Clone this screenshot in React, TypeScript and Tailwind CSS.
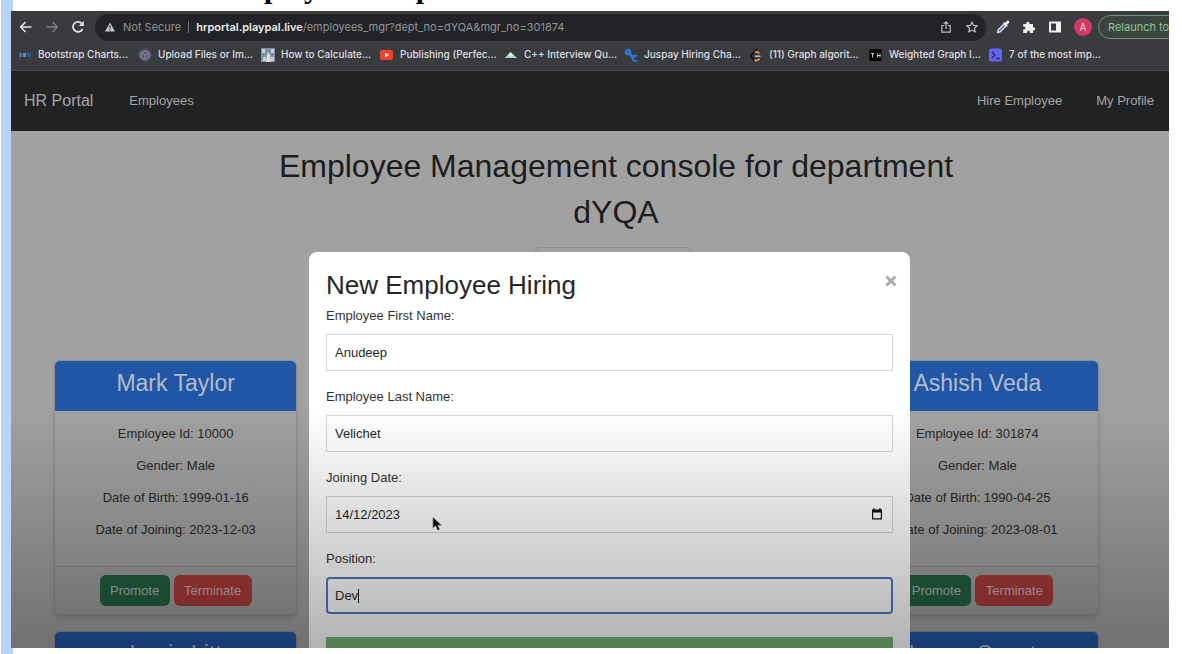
import React from "react";

type Bookmark = { label: string; width: string; icon: React.ReactNode };

const bookmarks: Bookmark[] = [
  {
    label: "Bootstrap Charts...",
    width: "w-[120px]",
    icon: (
      <svg viewBox="0 0 14 14" className="size-3.5">
        <rect x="1" y="5" width="3" height="4" fill="#2f7bbd" />
        <rect x="5" y="5" width="3" height="4" fill="#3f9be0" />
        <rect x="9" y="5" width="4" height="4" fill="#2a5c9c" />
      </svg>
    ),
  },
  {
    label: "Upload Files or Im...",
    width: "w-[123px]",
    icon: (
      <svg viewBox="0 0 14 14" className="size-3.5">
        <circle cx="7" cy="7" r="6.5" fill="#56586c" />
        <path d="M3 5l4-2 4 2v4l-4 2-4-2zM3 5l4 2 4-2M7 7v4" fill="none" stroke="#8a8ca3" strokeWidth="1" />
      </svg>
    ),
  },
  {
    label: "How to Calculate...",
    width: "w-[119px]",
    icon: (
      <svg viewBox="0 0 14 14" className="size-3.5">
        <rect width="14" height="14" fill="#7d93a3" />
        <path d="M1 1h3v4H1zM10 1h3v4h-3zM2 9h3v4H2zM10 9h3v4h-3z" fill="#c3d2dc" />
        <path d="M5 14l1-7 1-3 2 3 1 7z" fill="#e2e4e6" />
      </svg>
    ),
  },
  {
    label: "Publishing (Perfec...",
    width: "w-[124px]",
    icon: (
      <svg viewBox="0 0 14 14" className="size-3.5">
        <rect x="0" y="2" width="13" height="10" rx="2.5" fill="#f0442f" />
        <path d="M5 4.8v4.4L9 7z" fill="#fff" />
      </svg>
    ),
  },
  {
    label: "C++ Interview Qu...",
    width: "w-[120px]",
    icon: (
      <svg viewBox="0 0 14 14" className="size-3.5">
        <path d="M1 10l5.5-6L13 10z" fill="#f1efe0" />
        <path d="M1 10l3-3 3 2 2-2 4 3z" fill="#9fd0c4" />
      </svg>
    ),
  },
  {
    label: "Juspay Hiring Cha...",
    width: "w-[125px]",
    icon: (
      <svg viewBox="0 0 14 14" className="size-3.5">
        <circle cx="4" cy="4" r="3.2" fill="#2f78d8" />
        <path d="M4 4l6 6" stroke="#2f78d8" strokeWidth="3" />
        <path d="M13 8.5a2.6 2.6 0 1 0 0 4" fill="none" stroke="#2f78d8" strokeWidth="2" />
        <circle cx="3.5" cy="3.5" r="1" fill="#1b4f9a" />
      </svg>
    ),
  },
  {
    label: "(11) Graph algorit...",
    width: "w-[120px]",
    icon: (
      <svg viewBox="0 0 14 14" className="size-3.5">
        <path d="M8.500 .8L2.500 6.800q-1 1.200 0 2.400L5.500 12.500" fill="none" stroke="#121212" strokeWidth="1.900" />
        <path d="M6 4.300q2-1.300 4.500 1M5.500 12q2.700 1.600 5-1.200" fill="none" stroke="#f0a032" strokeWidth="1.700" />
        <path d="M6 8.200h5.500" stroke="#c0c0c0" strokeWidth="1.500" />
      </svg>
    ),
  },
  {
    label: "Weighted Graph I...",
    width: "w-[120px]",
    icon: (
      <svg viewBox="0 0 14 14" className="size-3.5">
        <rect x="0.5" y="1" width="12" height="12" fill="#000" />
        <path d="M2 5.500h3M3.500 5.500v4M8.500 5.500v4M11 5.500v4M8 7.500h3.500" stroke="#cfcfcf" strokeWidth="1" />
      </svg>
    ),
  },
  {
    label: "7 of the most imp...",
    width: "w-[120px]",
    icon: (
      <svg viewBox="0 0 14 14" className="size-3.5">
        <rect x="0" y="0.500" width="13" height="13" rx="2" fill="#6263f2" />
        <path d="M3 4l3 3-3 3M7 10.500h4" fill="none" stroke="#24246b" strokeWidth="1.300" />
      </svg>
    ),
  },
];

function BrowserBar() {
  return (
    <header className="shrink-0 border-b border-[#4b4c50] bg-[#3a3b3f] font-[Inter,sans-serif]">
      <div className="flex h-8 items-center overflow-hidden">
        <div className="flex w-[84px] shrink-0 items-center gap-3 pl-2">
          <button type="button" aria-label="Back" className="text-[#e2e3e5]">
            <svg viewBox="0 0 14 14" className="size-3.5" fill="none" stroke="currentColor" strokeWidth="1.6">
              <path d="M12.500 7H2M6.500 2L1.700 7l4.800 5" />
            </svg>
          </button>
          <button type="button" aria-label="Forward" className="text-[#7d7e82]">
            <svg viewBox="0 0 14 14" className="size-3.5" fill="none" stroke="currentColor" strokeWidth="1.5">
              <path d="M1.500 7H12M7.500 2l4.800 5-4.800 5" />
            </svg>
          </button>
          <button type="button" aria-label="Reload" className="text-[#e2e3e5]">
            <svg viewBox="0 0 14 14" className="size-3.5" fill="none" stroke="currentColor" strokeWidth="1.800">
              <path d="M11.500 9A5 5 0 1 1 10.800 3.600" />
              <path d="M12.800 1v5H7.800z" fill="currentColor" stroke="none" />
            </svg>
          </button>
        </div>
        <div className="flex h-[27px] flex-1 items-center rounded-full bg-[#212327] pr-2 pl-2.5 text-[11px] text-[#93959a]">
          <svg viewBox="0 0 12 12" className="mr-2 size-2.5 shrink-0">
            <path d="M6 .5L12 11.500H0z" fill="#c3c4c7" />
            <path d="M6 4.200v3.600M6 8.800v1.400" stroke="#212327" strokeWidth="1.300" />
          </svg>
          <span>Not Secure</span>
          <span className="mx-[7px] h-3 w-px bg-[#6b6d72]" />
          <span className="truncate">
            <span className="font-semibold text-[#eceded]">hrportal.playpal.live</span>
            /employees_mgr?dept_no=dYQA&amp;mgr_no=301874
          </span>
          <span className="flex flex-1 items-center justify-end gap-3.5 text-[#b9babd]">
            <button type="button" aria-label="Share">
              <svg viewBox="0 0 12 12" className="size-3" fill="none" stroke="currentColor" strokeWidth="1.200">
                <path d="M4 4.500H1.800v6.700h8.400V4.500H8M6 8V1M3.800 3L6 .9 8.200 3" />
              </svg>
            </button>
            <button type="button" aria-label="Bookmark this page">
              <svg viewBox="0 0 12 12" className="size-3" fill="none" stroke="currentColor" strokeWidth="1.200" strokeLinejoin="round">
                <path d="M6 .9l1.500 3.500 3.800.3-2.900 2.500.9 3.700L6 8.900l-3.300 2 .9-3.700L.7 4.700l3.800-.3z" />
              </svg>
            </button>
          </span>
        </div>
        <div className="-mr-6 flex shrink-0 items-center gap-3 pl-2.5">
          <svg viewBox="0 0 14 14" className="size-3.5">
            <path d="M1.500 12.500l.6-2.600L8 4l2 2-5.900 5.900z" fill="#6668b8" stroke="#eceded" strokeWidth="1.200" />
            <path d="M7 3l4 4 .9-.9-1-1 2-2a1.300 1.300 0 0 0-2-2l-2 2-1-1z" fill="#f4f4f4" />
          </svg>
          <svg viewBox="0 0 14 14" className="size-3.5">
            <path
              d="M1.200 4h3V3.300a1.600 1.600 0 0 1 3.200 0V4H11v3.200h.6a1.600 1.600 0 0 1 0 3.200H11V13H7.900v-.8a1.400 1.400 0 0 0-2.800 0v.8H1.200V9.600H2a1.400 1.400 0 0 0 0-2.800h-.8z"
              fill="#f0f0f0"
            />
          </svg>
          <svg viewBox="0 0 14 14" className="size-3.5">
            <path d="M1 1.500h12v11H1zM3 3.500v7h5v-7z" fill="#f0f0f0" fillRule="evenodd" />
          </svg>
          <div className="-mr-1.5 flex items-center gap-1.5">
            <span className="flex size-[18px] items-center justify-center rounded-full bg-[#d03a62] text-[10px] text-[#f4d5dc]">
              A
            </span>
            <button
              type="button"
              className="h-6 w-[101px] rounded-full border border-[#6f9379] bg-[#3b443f] pl-[9px] text-left text-[11px] whitespace-nowrap text-[#8dc79b]"
            >
              Relaunch to
            </button>
          </div>
        </div>
      </div>
      <nav aria-label="Bookmarks" className="flex h-[27px] overflow-hidden pb-1 pl-[7px]">
        {bookmarks.map((b) => (
          <a
            key={b.label}
            href="#"
            className={`flex shrink-0 items-center gap-1.5 text-[10px] font-medium whitespace-nowrap text-[#dedfe1] ${b.width}`}
          >
            {b.icon}
            {b.label}
          </a>
        ))}
      </nav>
    </header>
  );
}

type Employee = { name: string; id: string; gender: string; born: string; joined: string; column: string };

const employees: Employee[] = [
  { name: "Mark Taylor", id: "10000", gender: "Male", born: "1999-01-16", joined: "2023-12-03", column: "col-start-1" },
  { name: "Ashish Veda", id: "301874", gender: "Male", born: "1990-04-25", joined: "2023-08-01", column: "col-start-4" },
];

const nextRow = [
  { name: "Louis Litt", column: "col-start-1" },
  { name: "Harvey Specter", column: "col-start-4" },
];

function CardTitle({ children }: { children: React.ReactNode }) {
  return <h2 className="-mx-px -mt-px h-[51px] bg-[#2155a6] text-[23px] leading-[46px] text-[#b3bccb]">{children}</h2>;
}

function EmployeeCard({ person }: { person: Employee }) {
  return (
    <article className={`overflow-hidden rounded-md border border-[#8d8d8d] text-center shadow-md ${person.column}`}>
      <CardTitle>{person.name}</CardTitle>
      <div className="flex flex-col gap-3 pt-[13px] pb-[26px] leading-5">
        <p>Employee Id: {person.id}</p>
        <p>Gender: {person.gender}</p>
        <p>Date of Birth: {person.born}</p>
        <p>Date of Joining: {person.joined}</p>
      </div>
      <div className="flex justify-center gap-1 border-t border-[#8a8a8a] bg-[#9d9d9d] py-2">
        <button type="button" className="h-[31px] w-[70px] rounded-md bg-[#226041] text-[#adb5b0]">
          Promote
        </button>
        <button type="button" className="h-[31px] w-[78px] rounded-md bg-[#a83a3a] text-[#c3b0b0]">
          Terminate
        </button>
      </div>
    </article>
  );
}

function Field({ id, label, value, children, active }: { id: string; label: string; value: string; children?: React.ReactNode; active?: boolean }) {
  return (
    <div className="flex flex-col gap-2">
      <label htmlFor={id} className="leading-5 text-[#333333]">
        {label}
      </label>
      <div className="relative">
        <input
          id={id}
          defaultValue={value}
          className={
            active
              ? "block h-[37px] w-full rounded-sm border-2 border-[#5478c8] px-[7px] text-[#2a2a2a] outline-none"
              : "block h-[37px] w-full border border-[#d6d6d6] px-2 text-[#1f1f1f] outline-none"
          }
        />
        {children}
      </div>
    </div>
  );
}

function HiringDialog() {
  return (
    <div className="absolute inset-x-0 top-[121px] flex justify-center pl-[39px]">
      <form role="dialog" aria-labelledby="hiring-title" className="w-[601px] rounded-lg bg-white px-[17px] pt-3 pb-6">
        <div className="flex items-center justify-between">
          <h2 id="hiring-title" className="text-[26px] leading-[42px] text-[#262626]">
            New Employee Hiring
          </h2>
          <button type="button" aria-label="Close" className="-mr-1 pb-2 text-[#aaaaaa]">
            <svg viewBox="0 0 12 12" className="size-3" stroke="currentColor" strokeWidth="3">
              <path d="M1.500 1.500l9 9M10.500 1.500l-9 9" />
            </svg>
          </button>
        </div>
        <div className="flex flex-col gap-4">
          <Field id="first" label="Employee First Name:" value="Anudeep" />
          <Field id="last" label="Employee Last Name:" value="Velichet" />
          <Field id="date" label="Joining Date:" value="14/12/2023">
            <svg viewBox="0 0 12 12" className="absolute top-3 right-2.5 size-3">
              <path d="M1 1.500h10v10H1zM2.200 4.500v5.800h7.600V4.500z" fill="#111" fillRule="evenodd" />
              <path d="M3 .3v2M9 .3v2" stroke="#111" strokeWidth="1.400" />
            </svg>
            <svg viewBox="0 0 12 18" className="absolute top-5 left-[106px] h-[17px] w-[11px]">
              <path d="M1 1v12l3-2.600 2 5 2.400-1-2.100-4.700H10.500z" fill="#0c0c0c" stroke="#bbb" strokeWidth=".7" />
            </svg>
          </Field>
          <Field id="position" label="Position:" value="Dev" active>
            <span className="absolute top-3 left-8 h-3.5 w-px bg-[#222]" />
          </Field>
        </div>
        <button type="submit" aria-label="Hire" className="mt-[23px] block h-10 w-full bg-[#76b573]" />
      </form>
    </div>
  );
}

export default function App() {
  return (
    <div className="flex h-screen flex-col overflow-hidden bg-white font-['Liberation_Sans',Arial,sans-serif] text-[13px]">
      <div className="flex h-[11px] shrink-0 items-end overflow-hidden pl-px">
        <div className="h-full w-3 shrink-0 bg-[#b9d4fb]" />
        <h1 className="pb-2 pl-[206px] font-['Liberation_Serif',serif] text-[30px] leading-[30px] font-bold whitespace-nowrap text-black">
          Employee to department
        </h1>
      </div>
      <div className="flex min-h-0 flex-1 pl-px">
        <div className="w-2.5 shrink-0 bg-[#b9d4fb]" />
        <div className="relative mr-[13px] flex min-w-0 flex-1 flex-col overflow-hidden">
          <BrowserBar />
          <nav aria-label="Main" className="flex h-[60px] shrink-0 items-center bg-[#212223] pr-[15px] pl-[13px] text-[#a6a6a6]">
            <a href="#" className="mr-9 text-base">
              HR Portal
            </a>
            <a href="#">Employees</a>
            <a href="#" className="mr-[34px] ml-auto">
              Hire Employee
            </a>
            <a href="#">My Profile</a>
          </nav>
          <main className="relative min-h-0 flex-1 overflow-hidden bg-[#a1a1a1] text-[#282828]">
            <div className="flex flex-col items-center pt-3 pl-[52px]">
              <h1 className="max-w-[720px] text-center text-[32px] leading-[46px] text-[#1c1c1c]">
                Employee Management console for department dYQA
              </h1>
              <select aria-label="Department" className="mt-3 mr-1.5 h-9 w-[157px] appearance-none rounded border border-[#8e8e8e]" />
            </div>
            <div className="mt-[77px] grid grid-cols-4 gap-x-6 gap-y-4 pr-[70px] pl-[43px]">
              {employees.map((e) => (
                <EmployeeCard key={e.name} person={e} />
              ))}
              {nextRow.map((e) => (
                <article key={e.name} className={`overflow-hidden rounded-md border border-[#8d8d8d] text-center ${e.column}`}>
                  <CardTitle>{e.name}</CardTitle>
                </article>
              ))}
            </div>
            <HiringDialog />
          </main>
          <div className="pointer-events-none absolute inset-x-0 bottom-0 h-60 bg-linear-to-b from-transparent to-black/30" />
        </div>
      </div>
      <div className="h-1.5 shrink-0 pl-px">
        <div className="h-full w-3 bg-[#b9d4fb]" />
      </div>
    </div>
  );
}
